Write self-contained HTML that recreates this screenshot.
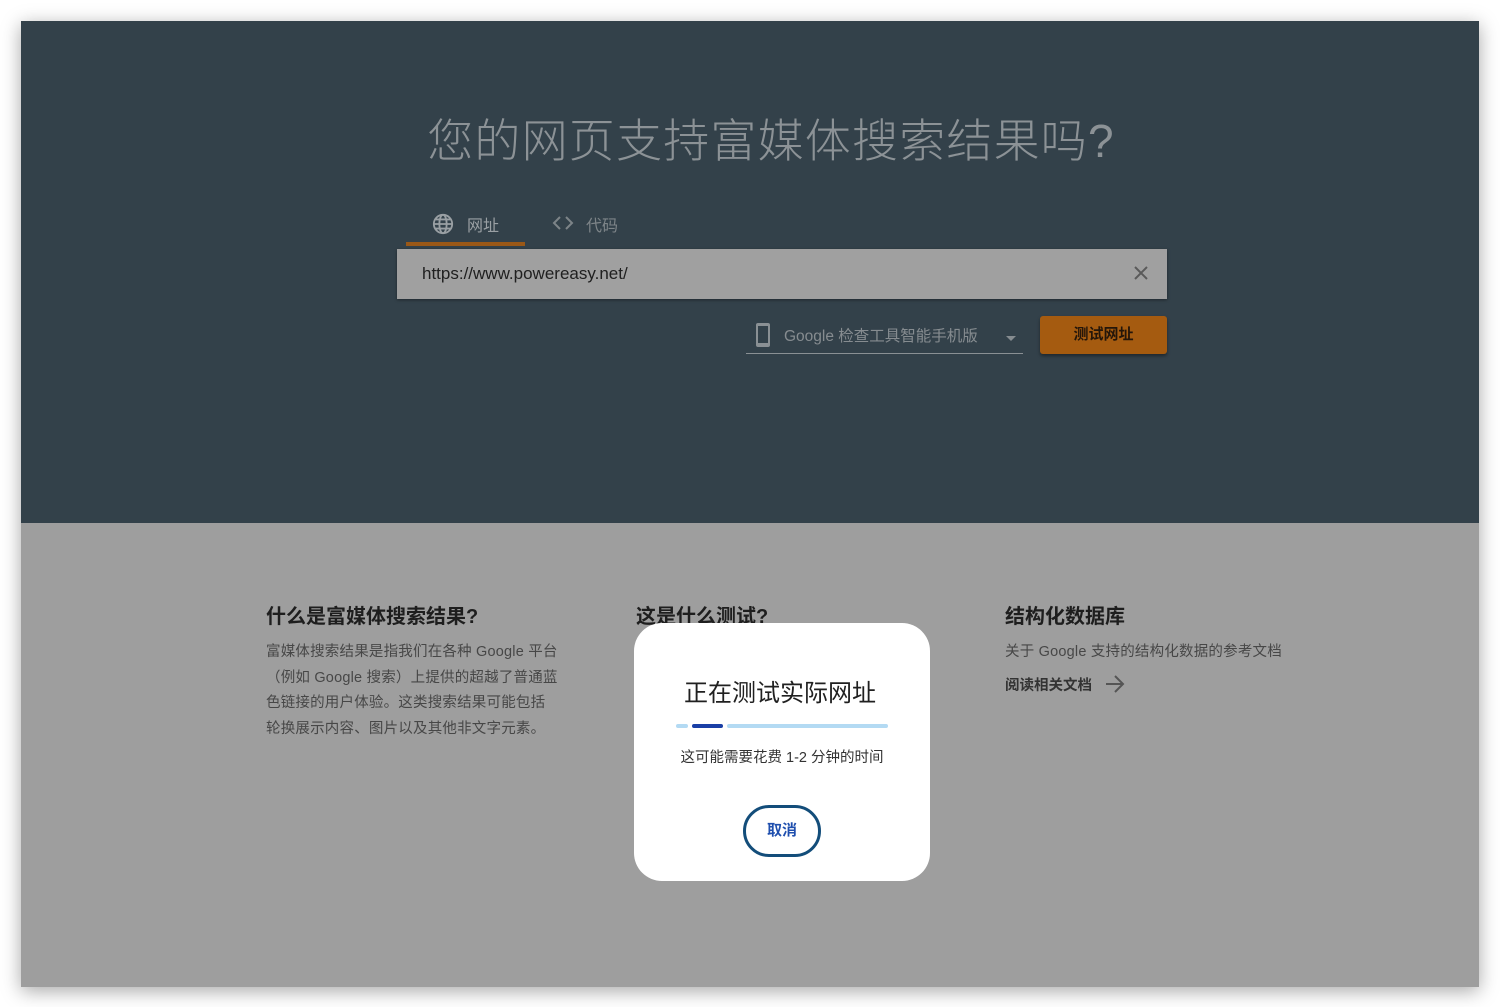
<!DOCTYPE html>
<html><head><meta charset="utf-8"><style>
*{margin:0;padding:0;box-sizing:border-box}
body{width:1500px;height:1007px;background:#fff;font-family:"Liberation Sans","Noto Sans CJK SC",sans-serif;position:relative;overflow:hidden}
.frame{position:absolute;left:21px;top:21px;width:1458px;height:966px;box-shadow:0 4px 18px rgba(0,0,0,.35);background:#9e9e9e}
.top{position:absolute;left:0;top:0;width:1458px;height:502px;background:#33414a}
.abs{position:absolute}
h1{position:absolute;left:0;width:1500px;text-align:center;top:105px;font-weight:300;font-size:46px;color:#8c9296;letter-spacing:1.2px;padding-left:42px}
.col h3{font-size:20px;font-weight:700;color:#1e1e1e;margin-bottom:11px}
.col p{font-size:14.5px;line-height:25.5px;color:#474747;white-space:nowrap;letter-spacing:0.2px}
</style></head><body>
<div class="frame"><div class="top"></div></div>
<h1>您的网页支持富媒体搜索结果吗?</h1>
<svg class="abs" style="left:432px;top:213px" width="22" height="22" viewBox="0 0 24 24" fill="none" stroke="#9aa0a4" stroke-width="2"><circle cx="12" cy="12" r="10"/><ellipse cx="12" cy="12" rx="4" ry="10"/><path d="M2 12h20M4 7h16M4 17h16"/></svg>
<div class="abs" style="left:467px;top:212px;font-size:16px;color:#9aa0a4">网址</div>
<div class="abs" style="left:406px;top:242px;width:119px;height:4px;background:#9a5817"></div>
<svg class="abs" style="left:552px;top:215px" width="22" height="16" viewBox="0 0 22 16" fill="none" stroke="#7d8488" stroke-width="2"><path d="M8 2L2 8l6 6M14 2l6 6-6 6"/></svg>
<div class="abs" style="left:586px;top:212px;font-size:16px;color:#7d8488">代码</div>
<div class="abs" style="left:397px;top:249px;width:770px;height:50px;background:#a0a0a0;box-shadow:0 1px 3px rgba(0,0,0,.4)"></div>
<div class="abs" style="left:422px;top:264px;font-size:17px;color:#202020">https://www.powereasy.net/</div>
<svg class="abs" style="left:1133px;top:265px" width="16" height="16" viewBox="0 0 16 16" stroke="#5a5a5a" stroke-width="2"><path d="M2 2L14 14M14 2L2 14"/></svg>
<div class="abs" style="left:756px;top:323px;width:14px;height:24px;border:2px solid #8a9094;border-radius:2px;border-top-width:3px;border-bottom-width:4px"></div>
<div class="abs" style="left:784px;top:324px;font-size:15.5px;color:#868c90">Google 检查工具智能手机版</div>
<div class="abs" style="left:1006px;top:336px;width:0;height:0;border-left:5px solid transparent;border-right:5px solid transparent;border-top:5px solid #868c90"></div>
<div class="abs" style="left:746px;top:353px;width:277px;height:1px;background:#8a9094"></div>
<div class="abs" style="left:1040px;top:316px;width:127px;height:38px;background:#a55b10;border-radius:3px;box-shadow:0 2px 3px rgba(0,0,0,.4);text-align:center;line-height:38px;font-size:15px;font-weight:700;color:#24160a">测试网址</div>
<div class="abs col" style="left:266px;top:600px;width:300px"><h3>什么是富媒体搜索结果?</h3><p>富媒体搜索结果是指我们在各种 Google 平台<br>（例如 Google 搜索）上提供的超越了普通蓝<br>色链接的用户体验。这类搜索结果可能包括<br>轮换展示内容、图片以及其他非文字元素。</p></div>
<div class="abs col" style="left:636px;top:600px;width:300px"><h3>这是什么测试?</h3></div>
<div class="abs col" style="left:1005px;top:600px;width:300px"><h3>结构化数据库</h3><p>关于 Google 支持的结构化数据的参考文档</p>
<div style="margin-top:8px;font-size:14.5px;font-weight:700;color:#333;position:relative">阅读相关文档
<svg style="position:absolute;left:100px;top:1px" width="20" height="18" viewBox="0 0 20 18" fill="none" stroke="#555" stroke-width="2"><path d="M1 9h17M10 1l8 8-8 8"/></svg></div></div>
<div class="abs" style="left:634px;top:623px;width:296px;height:258px;background:#fff;border-radius:28px"></div>
<div class="abs" style="left:634px;top:673px;width:296px;text-align:center;font-size:24px;color:#202020;padding-right:4px">正在测试实际网址</div>
<div class="abs" style="left:676px;top:724px;width:12px;height:4px;background:#b3daf3;border-radius:2px"></div>
<div class="abs" style="left:692px;top:724px;width:31px;height:4px;background:#1a3fa6;border-radius:2px"></div>
<div class="abs" style="left:727px;top:724px;width:161px;height:4px;background:#b3daf3;border-radius:2px"></div>
<div class="abs" style="left:634px;top:746px;width:296px;text-align:center;font-size:14.5px;color:#333">这可能需要花费 1-2 分钟的时间</div>
<div class="abs" style="left:743px;top:805px;width:78px;height:52px;border:3px solid #134d7a;border-radius:26px;text-align:center;line-height:46px;font-size:15px;font-weight:700;color:#1f4fae">取消</div>
</body></html>
